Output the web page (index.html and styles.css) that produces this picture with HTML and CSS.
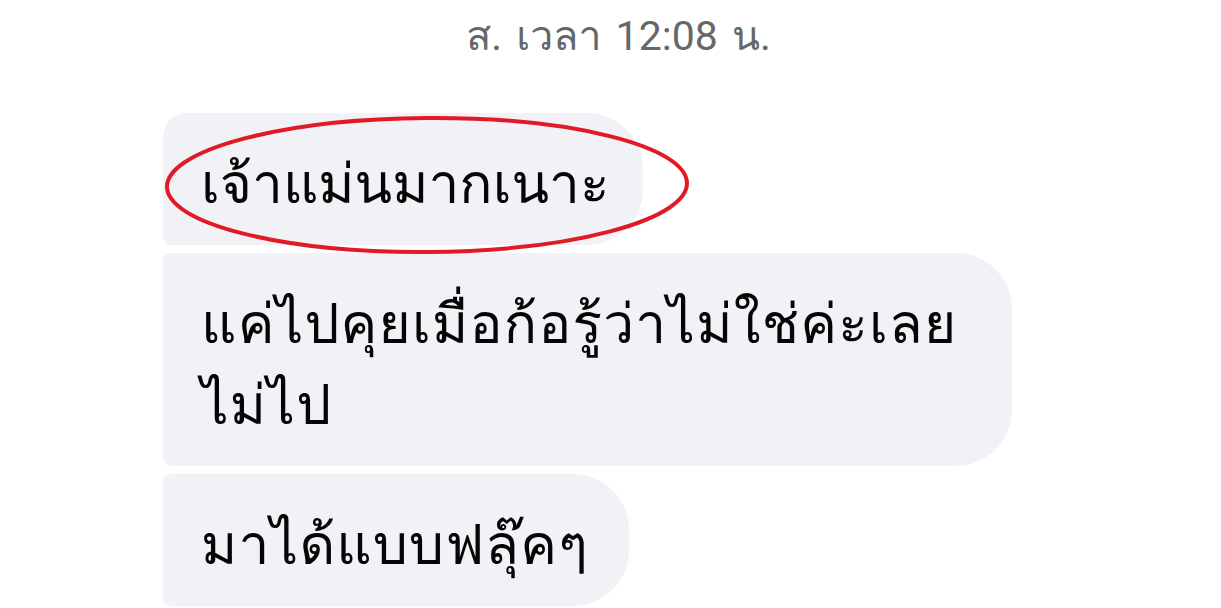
FILE: index.html
```html
<!DOCTYPE html>
<html lang="th">
	<head>
		<meta charset="utf-8">
		<title>chat</title>
		<link rel="stylesheet" href="styles.css">
	</head>
	<body>
		<div class="time">ส. เวลา 12:08 น.</div>
		<div class="thread">
			<div class="msg first">เจ้าแม่นมากเนาะ</div>
			<div class="msg">แค่ไปคุยเมื่อก้อรู้ว่าไม่ใช่ค่ะเลย ไม่ไป</div>
			<div class="msg">มาได้แบบฟลุ๊คๆ</div>
			<svg class="circle" width="540" height="160" viewBox="0 0 540 160">
				<ellipse cx="264" cy="76" rx="260" ry="67" transform="rotate(-0.4 264 76)" fill="none" stroke="#e11b26" stroke-width="4"/>
			</svg>
		</div>
	</body>
</html>
```
FILE: styles.css
```css
body {
	margin: 0;
	background: #fff;
	font-family: Loma, sans-serif;
	overflow: hidden;
}
.time {
	height: 80px;
	line-height: 80px;
	margin-top: -4px;
	text-align: center;
	font-family: Roboto, Loma, sans-serif;
	font-size: 41px;
	word-spacing: 4px;
	color: #65676b;
	padding-left: 16px;
}
.thread {
	position: relative;
	display: flex;
	flex-direction: column;
	align-items: flex-start;
	gap: 8px;
	padding: 37px 0 0 163px;
}
.msg {
	box-sizing: border-box;
	max-width: 849px;
	background: #f1f2f6;
	color: #050505;
	font-size: 55px;
	line-height: 81px;
	letter-spacing: 1.2px;
	padding: 30px 40px 21px 38px;
	border-radius: 8px 56px 56px 8px;
}
.msg.first {
	letter-spacing: 0;
	padding-right: 34px;
	border-top-left-radius: 24px;
}
.circle {
	position: absolute;
	left: 163px;
	top: 33px;
}
```
